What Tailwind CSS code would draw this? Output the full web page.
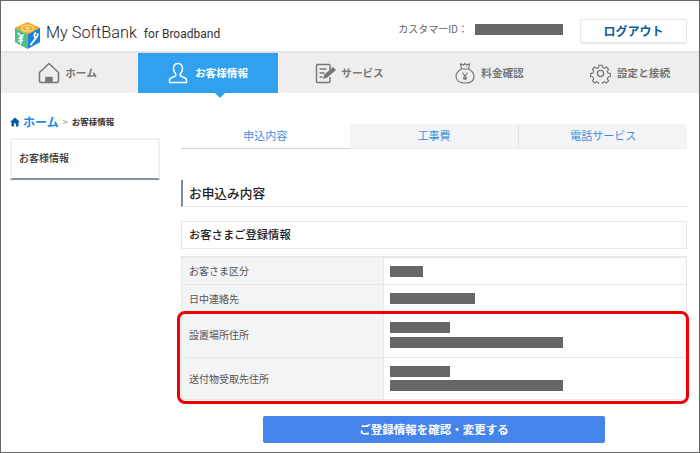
<!DOCTYPE html>
<html lang="ja">
<head>
  <meta charset="UTF-8">
  <title>My SoftBank</title>
  <script src="https://cdn.jsdelivr.net/npm/@tailwindcss/browser@4"></script>
</head>
<body class="bg-white">
  <div class="relative w-[700px] h-[453px] overflow-hidden border border-[#666] font-['Noto_Sans_CJK_JP','Noto_Sans',sans-serif] text-[#333]">

    <!-- ヘッダー -->
    <header class="flex items-center h-[52px] pt-[6px] border-b-2 border-[#e4e4e4]">
      <svg class="ml-[13px] mt-[12px] w-[27px] h-[29px]" viewBox="0 0 28 30">
        <polygon points="14,1 27,7 14,14 1,7" fill="#f7a823"/>
        <polygon points="1,7 14,14 14,29 1,22" fill="#4fc08d"/>
        <polygon points="27,7 14,14 14,29 27,22" fill="#1f7fd6"/>
        <ellipse cx="14" cy="7.500" rx="6" ry="3" fill="none" stroke="#fbe39a" stroke-width="1.300"/>
        <ellipse cx="14" cy="7.500" rx="2.500" ry="1.200" fill="#fbe39a"/>
        <path d="M4 12l3 4 3-2M7 16v8M4.500 18l5-1M4.500 21l5-1" fill="none" stroke="#fff" stroke-width="1.600"/>
        <path d="M17 25l7-9M23 12a3 3 0 0 0 -1 5l2-1 1-3" fill="none" stroke="#fff" stroke-width="1.800"/>
      </svg>
      <span class="ml-[5px] mt-[8px] text-[16.300px] font-['Roboto',sans-serif] text-[#222] font-light leading-none whitespace-nowrap">My SoftBank</span>
      <span class="ml-[7px] mt-[10px] text-[12px] font-['Roboto',sans-serif] text-[#333] leading-none whitespace-nowrap">for Broadband</span>
      <span class="ml-auto text-[10px] text-[#666] leading-none">カスタマーID：</span>
      <span class="ml-[7px] mt-[1px] w-[88px] h-[11px] bg-[#666]"></span>
      <a class="flex items-center justify-center ml-[17px] mr-[12px] mt-[4px] w-[107px] h-[24px] rounded-[2px] border border-[#e6e6e6] shadow-[0_1px_1px_#e8e8e8] text-[12px] font-bold text-[#0b5a9e]">ログアウト</a>
    </header>

    <!-- メニュー -->
    <nav class="grid grid-cols-[136px_142px_1fr_1fr_1fr] h-[40px] bg-[#eeeeee] text-[10.600px] font-bold text-[#777]">
      <a class="flex items-center justify-center gap-[5px] pr-[3px]">
        <svg class="w-[22px] h-[22px]" viewBox="0 0 22 22" fill="none" stroke="#777" stroke-width="1.500">
          <path d="M1.500 10.500L11 1.500l9.500 9V19a1.500 1.500 0 0 1-1.500 1.500H3A1.500 1.500 0 0 1 1.500 19z"/>
          <path d="M8 20.500v-5h6v5" fill="#777"/>
        </svg>
        ホーム
      </a>
      <a class="relative flex items-center justify-center gap-[7px] bg-[#31a0ee] text-white border-x border-white">
        <svg class="w-[20px] h-[22px]" viewBox="0 0 20 22" fill="none" stroke="#fff" stroke-width="1.500">
          <path d="M10 1.500c-3 0-4.500 2.200-4.500 5 0 2.200 1 4 2.200 5.200v2.100c-1 1-6.200 1.700-6.200 4.200v2.500h17v-2.500c0-2.500-5.200-3.200-6.200-4.200v-2.100c1.200-1.200 2.200-3 2.200-5.200 0-2.800-1.500-5-4.500-5z"/>
        </svg>
        お客様情報
        <span class="absolute left-[77px] top-full w-0 h-0 border-x-[5px] border-x-transparent border-t-[5px] border-t-[#31a0ee]"></span>
      </a>
      <a class="flex items-center justify-center gap-[5px] pl-[1px]">
        <svg class="w-[21px] h-[21px]" viewBox="0 0 21 21" fill="none" stroke="#777" stroke-width="1.400">
          <path d="M15 7V2.500a1 1 0 0 0-1-1H2.500a1 1 0 0 0-1 1v16a1 1 0 0 0 1 1H14a1 1 0 0 0 1-1V14"/>
          <path d="M4.500 6h7M4.500 10h5M4.500 14h3"/>
          <path d="M9 15l1-3 8-7 2 2-8 7z" fill="#777"/>
        </svg>
        サービス
      </a>
      <a class="flex items-center justify-center gap-[6px] pl-[1px]">
        <svg class="w-[20px] h-[22px]" viewBox="0 0 20 22" fill="none" stroke="#777" stroke-width="1.200">
          <path d="M6.500 7L5.500 2l3 1L10 1.500 11.500 3l3-1-1 5"/>
          <path d="M6.500 7h7c3.300 1.800 5.500 4.500 5.500 7.500 0 4-3.500 6.500-9 6.500s-9-2.500-9-6.500C1 11.500 3.200 8.800 6.500 7z"/>
          <path d="M7.500 10.500L10 14l2.500-3.500M10 14v4M8 15h4M8 16.600h4"/>
        </svg>
        料金確認
      </a>
      <a class="flex items-center justify-center gap-[6px] pl-[2px]">
        <svg class="w-[21px] h-[21px]" viewBox="0 0 24 24" fill="none" stroke="#777" stroke-width="1.500">
          <circle cx="12" cy="12" r="3.500"/>
          <path d="M10 1.500h4l.6 3 2.300 1 2.600-1.700 2.800 2.800-1.700 2.600 1 2.300 2.900.6v3.800l-2.900.6-1 2.300 1.700 2.600-2.800 2.800-2.600-1.700-2.300 1-.6 3h-4l-.6-3-2.300-1-2.600 1.700-2.800-2.800 1.700-2.600-1-2.300-2.900-.6v-3.800l2.900-.6 1-2.300L1.700 6.600l2.800-2.800 2.600 1.700 2.300-1z" transform="translate(1.200 1.200) scale(.9)"/>
        </svg>
        設定と接続
      </a>
    </nav>

    <div class="flex pl-[9px] pr-[12px]">
      <!-- サイドメニュー -->
      <aside class="w-[150px]">
        <div class="flex items-center h-[19px] mt-[19px] whitespace-nowrap">
          <svg class="w-[10px] h-[10px]" viewBox="0 0 10 10"><path d="M5 .5L0 5h1.500v4.500h2.500V6.500h2v3h2.500V5H10z" fill="#0b5a9e"/></svg>
          <span class="ml-[3px] text-[12px] font-bold text-[#1e88e5] leading-none">ホーム</span>
          <span class="ml-[4px] text-[9px] text-[#888] leading-none">&gt;</span>
          <span class="ml-[4px] text-[8.500px] font-bold text-[#333] leading-none">お客様情報</span>
        </div>
        <div class="flex items-start h-[42px] mt-[7px] pl-[7px] pt-[13px] border-2 border-[#f0f0f0] border-b-[#8592a0] text-[10px] font-medium text-[#333] leading-none">お客様情報</div>
      </aside>

      <!-- メイン -->
      <main class="ml-[21px] w-[506px]">
        <div class="grid grid-cols-3 h-[25px] mt-[31px] text-[11px] text-[#3f8fe0] text-center leading-[23px]">
          <a class="border-b border-[#d0d3da]">申込内容</a>
          <a class="bg-[#f3f4f6] border-b border-[#ececec]">工事費</a>
          <a class="bg-[#f3f4f6] border-l border-[#e2e2e2] border-b border-b-[#ececec]">電話サービス</a>
        </div>

        <h2 class="flex items-center h-[27px] mt-[31px] pl-[6px] border-l-2 border-l-[#7d8a99] border-b border-b-[#e6e6e6] text-[12.700px] font-medium text-[#222] leading-none">お申込み内容</h2>

        <h3 class="flex items-center h-[28px] mt-[14px] pl-[7px] border border-[#e8e8e8] text-[11.300px] font-medium text-[#222] leading-none">お客さまご登録情報</h3>

        <div class="relative mt-[7px]">
          <div class="border border-[#e8e8e8] border-t-2 text-[10px] text-[#555] leading-none">
            <div class="grid grid-cols-[202px_1fr] h-[27px] border-b border-[#e8e8e8]">
              <div class="flex items-center pl-[7px] pb-[1px] bg-[#f3f4f6] border-r border-[#e8e8e8]">お客さま区分</div>
              <div class="flex items-center pl-[6px]"><span class="w-[33px] h-[11px] bg-[#666]"></span></div>
            </div>
            <div class="grid grid-cols-[202px_1fr] h-[28px] border-b border-[#e8e8e8]">
              <div class="flex items-center pl-[7px] bg-[#f3f4f6] border-r border-[#e8e8e8]">日中連絡先</div>
              <div class="flex items-center pl-[6px]"><span class="w-[85px] h-[11px] bg-[#666]"></span></div>
            </div>
            <div class="grid grid-cols-[202px_1fr] h-[45px] border-b border-[#e8e8e8]">
              <div class="flex items-center pl-[7px] bg-[#f3f4f6] border-r border-[#e8e8e8]">設置場所住所</div>
              <div class="flex flex-col justify-center gap-[4px] pl-[6px]"><span class="w-[60px] h-[11px] bg-[#666]"></span><span class="w-[173px] h-[11px] bg-[#666]"></span></div>
            </div>
            <div class="grid grid-cols-[202px_1fr] h-[41px]">
              <div class="flex items-center pl-[7px] bg-[#f3f4f6] border-r border-[#e8e8e8]">送付物受取先住所</div>
              <div class="flex flex-col justify-center gap-[3px] pl-[6px]"><span class="w-[60px] h-[11px] bg-[#666]"></span><span class="w-[173px] h-[11px] bg-[#666]"></span></div>
            </div>
          </div>
          <!-- 赤枠 -->
          <div class="absolute left-[-4px] right-[-2px] top-[55px] h-[93px] border-[3px] border-[#f00000] rounded-[8px]"></div>
        </div>

        <a class="flex items-center justify-center w-[342px] h-[27px] mt-[16px] ml-[82px] rounded-[2px] bg-[#4484eb] text-[11.500px] font-bold text-white leading-none">ご登録情報を確認・変更する</a>
      </main>
    </div>
  </div>
</body>
</html>
